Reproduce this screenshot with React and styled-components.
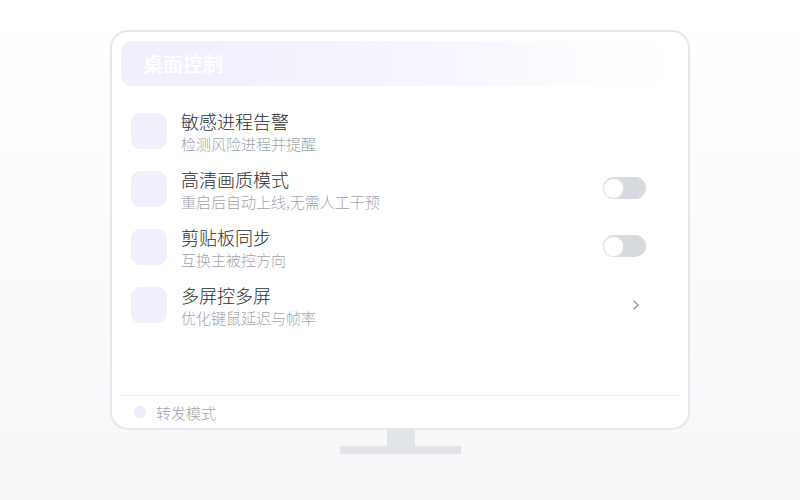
import styled, { createGlobalStyle } from "styled-components";

const GlobalStyle = createGlobalStyle`
  html, body {
    margin: 0;
    background: linear-gradient(180deg, #ffffff 0%, #fbfbfc 45%, #f7f7f9 100%);
    font-family: "Noto Sans CJK SC", "Noto Sans", sans-serif;
  }
`;

const Page = styled.div`
  width: 800px;
  height: 500px;
  display: flex;
  flex-direction: column;
  align-items: center;
  padding-top: 30px;
  box-sizing: border-box;
`;

const Screen = styled.div`
  width: 580px;
  height: 400px;
  box-sizing: border-box;
  border: 2px solid #e4e6ea;
  border-radius: 18px;
  background: #ffffff;
  padding: 9px 10px 0 9px;
  display: flex;
  flex-direction: column;
`;

const Header = styled.div`
  height: 45px;
  flex-shrink: 0;
  border-radius: 10px;
  background: linear-gradient(90deg, #f1eefd 0%, #f6f4fe 50%, #fdfcff 85%, #ffffff 100%);
  display: flex;
  align-items: center;
  padding-left: 22px;
`;

const Title = styled.h1`
  margin: 0;
  font-size: 20px;
  font-weight: 500;
  color: #ffffff;
`;

const List = styled.ul`
  list-style: none;
  margin: 0;
  padding: 27px 32px 0 10px;
  flex: 1;
  display: flex;
  flex-direction: column;
  gap: 22px;
`;

const Row = styled.li`
  height: 36px;
  display: flex;
  align-items: center;
  gap: 14px;
`;

const IconBox = styled.div`
  width: 36px;
  height: 36px;
  border-radius: 9px;
  background: #f2effd;
  flex-shrink: 0;
`;

const Texts = styled.div`
  flex: 1;
  display: flex;
  flex-direction: column;
  gap: 1px;
`;

const ItemTitle = styled.span`
  font-size: 18px;
  line-height: 23px;
  font-weight: 300;
  color: #2a2d32;
`;

const ItemDesc = styled.span`
  font-size: 15px;
  line-height: 19px;
  font-weight: 300;
  color: #a0a5ad;
`;

const Toggle = styled.div`
  width: 43px;
  height: 22px;
  margin-top: -2px;
  border-radius: 11px;
  background: #d6d9de;
  display: flex;
  align-items: center;
  padding: 1px;
  box-sizing: border-box;
  justify-content: ${(p) => (p.$on ? "flex-end" : "flex-start")};
`;

const Knob = styled.span`
  width: 19px;
  height: 19px;
  border-radius: 50%;
  background: #ffffff;
  box-shadow: 0 0 0 1px #e3e5e9;
`;

const Chevron = styled.svg`
  margin-right: 6px;
  color: #8e939b;
`;

const Footer = styled.div`
  height: 32px;
  flex-shrink: 0;
  border-top: 1px solid #eef0f3;
  display: flex;
  align-items: center;
  gap: 10px;
  padding-left: 13px;
`;

const Dot = styled.span`
  width: 12px;
  height: 12px;
  border-radius: 50%;
  background: #efecfd;
`;

const FooterText = styled.span`
  font-size: 15px;
  font-weight: 300;
  color: #9ea3ab;
`;

const Neck = styled.div`
  width: 28px;
  height: 16px;
  background: #e1e4e8;
  margin-left: 2px;
`;

const Base = styled.div`
  width: 121px;
  height: 8px;
  background: #e1e4e8;
`;

const items = [
  { title: "敏感进程告警", desc: "检测风险进程并提醒", action: null },
  { title: "高清画质模式", desc: "重启后自动上线,无需人工干预", action: "toggle" },
  { title: "剪贴板同步", desc: "互换主被控方向", action: "toggle" },
  { title: "多屏控多屏", desc: "优化键鼠延迟与帧率", action: "link" },
];

export default function App() {
  return (
    <>
      <GlobalStyle />
      <Page>
        <Screen>
          <Header>
            <Title>桌面控制</Title>
          </Header>
          <List>
            {items.map((item) => (
              <Row key={item.title}>
                <IconBox />
                <Texts>
                  <ItemTitle>{item.title}</ItemTitle>
                  <ItemDesc>{item.desc}</ItemDesc>
                </Texts>
                {item.action === "toggle" && (
                  <Toggle>
                    <Knob />
                  </Toggle>
                )}
                {item.action === "link" && (
                  <Chevron width="8" height="12" viewBox="0 0 8 12" fill="none">
                    <path d="M2 2 L6 6 L2 10" stroke="currentColor" strokeWidth="1.3" strokeLinecap="round" strokeLinejoin="round" />
                  </Chevron>
                )}
              </Row>
            ))}
          </List>
          <Footer>
            <Dot />
            <FooterText>转发模式</FooterText>
          </Footer>
        </Screen>
        <Neck />
        <Base />
      </Page>
    </>
  );
}
